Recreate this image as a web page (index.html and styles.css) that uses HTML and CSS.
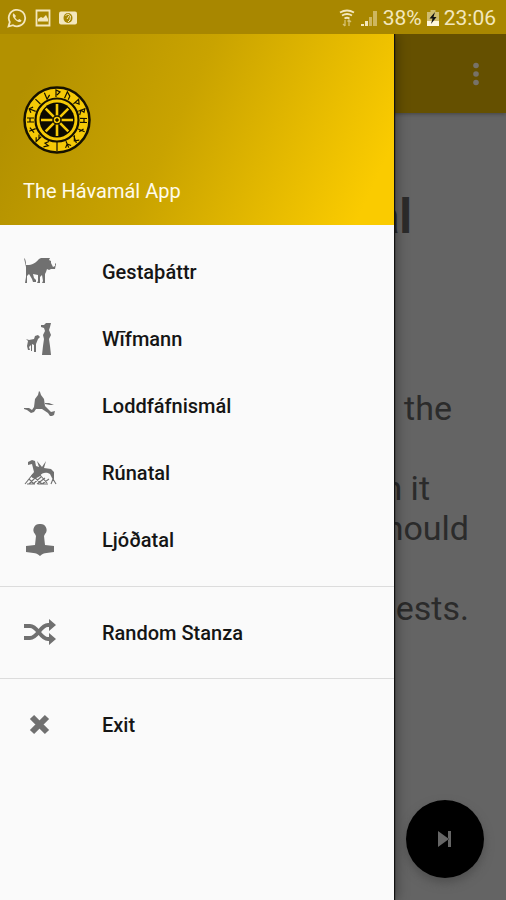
FILE: index.html
```html
<!DOCTYPE html>
<html lang="en">
<head>
<meta charset="utf-8">
<meta name="viewport" content="width=device-width, initial-scale=1">
<title>The Hávamál App</title>
<link rel="stylesheet" href="styles.css">
</head>
<body>
<div class="status">
  <div class="status-group notices">
    <svg width="20" height="20" viewBox="0 0 20 20" fill="none" stroke="currentColor" stroke-width="1.8"><path d="M1.500 18.500 2.800 14A8.200 8.200 0 1 1 6 17.200z"/><path d="M6.600 5.300c-2 2 0 5 2.200 7 2.200 1.900 4.700 2.700 5.800.3l-2.300-1.500-1.300 1c-1.500-.6-2.300-1.500-2.900-2.900l.9-1.200z" fill="currentColor" stroke="none"/></svg>
    <svg width="16" height="18" viewBox="0 0 16 18" fill="none" stroke="currentColor" stroke-width="1.800"><path d="M1.500 1.500h13v15h-13z"/><path d="M3 12.500V10l3-2 2 1 3-3 2 4v2.500z" fill="currentColor" stroke="none"/></svg>
    <svg width="18" height="14" viewBox="0 0 18 14"><rect width="18" height="13" y=".5" rx="2" fill="currentColor"/><ellipse cx="9" cy="7" rx="4.500" ry="5" fill="#a68600"/><path d="M6.500 4.500 9 3l2.500 2-.5 4-2 2M8 8l2-3" fill="none" stroke="currentColor"/></svg>
  </div>
  <div class="status-group">
    <svg width="16" height="18" viewBox="0 0 16 18" fill="none" stroke="currentColor" stroke-width="1.800"><path d="M1 3.500q7-4 14 0M3 6.500q5-3 10 0M5.500 9.500q2.500-1.500 5 0"/><path d="M6 11v6M4 15l2 2M10 17v-6M8.500 12.500 10 11l2 2" stroke-width="1.300" opacity=".6"/></svg>
    <svg width="18" height="18" viewBox="0 0 18 18" fill="currentColor"><path d="M1 15h3v2H1zM5 12h3v5H5z"/><path d="M9 8h3v9H9zM13 2h4v15h-4z" opacity=".5"/></svg>
    <span>38%</span>
    <svg width="12" height="18" viewBox="0 0 12 18"><path d="M3.500 1h5v2H12v14H0V3h3.500z" fill="#e9dfb8" opacity=".6"/><path d="M0 12h12v5H0z" fill="#fff8dc"/><path d="M8 3 2.500 9.500h3L4 15l5.500-7h-3z" fill="#111"/></svg>
    <span>23:06</span>
  </div>
</div>
<div class="screen">
  <div class="page">
    <header class="toolbar">
      <button class="more" aria-label="More options"><svg width="8" height="24" viewBox="0 0 8 24" fill="currentColor"><circle cx="4" cy="3.500" r="2.800"/><circle cx="4" cy="12" r="2.800"/><circle cx="4" cy="20.500" r="2.800"/></svg></button>
    </header>
    <main class="stanza">
      <h1>Hávamál</h1>
      <p class="line">before the</p>
      <p class="line short gap">when it</p>
      <p class="line wide">should</p>
      <p class="line wide gap">guests.</p>
    </main>
    <button class="next" aria-label="Next stanza"><svg width="16" height="18" viewBox="0 0 16 18" fill="currentColor"><path d="M1 1v16l11-8zM11 1h3v16h-3z"/></svg></button>
  </div>
  <aside class="drawer">
    <div class="brand">
      <svg width="68" height="68" viewBox="0 0 68 68" fill="none" stroke="#151100">
        <circle cx="34" cy="34" r="32.500" fill="#f5c906" stroke-width="2.500"/>
        <circle cx="34" cy="34" r="21.500" stroke-width="2.200"/>
        <circle cx="34" cy="34" r="17.500" fill="#0c0a00" stroke="none"/>
        <path d="M34 18v32M18 34h32M22.700 22.700l22.600 22.600M45.300 22.700 22.700 45.300" stroke="#f5c906" stroke-width="2.600"/>
        <circle cx="34" cy="34" r="4" fill="#f5c906" stroke="#151100" stroke-width="1.500"/><circle cx="34" cy="34" r="1.300" fill="#151100"/>
        <g stroke-width="1.200">
          <path d="M33 11V4l4 2-3 3"/>
          <path d="M32 11V4l4 3v4" transform="rotate(24 34 34)"/>
          <path d="M33 11V4l4 3-4 2" transform="rotate(48 34 34)"/>
          <path d="M33 11V4l3 2-3 2 4 3" transform="rotate(70 34 34)"/>
          <path d="M32 4v7M36 4v7M32 7h4" transform="rotate(91 34 34)"/>
          <path d="M34 4v7M32 6l4 3" transform="rotate(113 34 34)"/>
          <path d="M32 4l4 3-4 4M36 4l-3 7" transform="rotate(136 34 34)"/>
          <path d="M34 4v7M31 5l3 3 3-3" transform="rotate(157 34 34)"/>
          <path d="M34 3v9" transform="rotate(180 34 34)"/>
          <path d="M36 4l-4 3 4 1-3 3" transform="rotate(203 34 34)"/>
          <path d="M33 11V4l3 3M33 8l3 3" transform="rotate(226 34 34)"/>
          <path d="M34 4v7M31 8l6-2" transform="rotate(248 34 34)"/>
          <path d="M32 4v7M36 4v7M32 7h4" transform="rotate(270 34 34)"/>
          <path d="M34 4v7M31 7l3-3 3 3" transform="rotate(292 34 34)"/>
          <path d="M34 4v7" transform="rotate(314 34 34)"/>
          <path d="M33 4v7l4-3" transform="rotate(337 34 34)"/>
        </g>
      </svg>
      <p class="app-name">The Hávamál App</p>
    </div>
    <nav>
      <ul class="menu">
        <li><a href="#gestathattr"><svg class="icon" viewBox="0 0 34 34"><path d="M1 3l1 1c1 2 1 5 1 6 4 0 8 0 13-6l2-1h9l-1 2 2 1v2l2 4 2-1V8l1 1-1 5h-4l-2 1-2-1-1 3-1 2v9h-3l1-2-1-6-2 2v6h-3l1-2v-6l-5-1 1 4 2 2v2H10l-1-3-3-5-2 2v7H2l1-6V12z"/></svg>Gestaþáttr</a></li>
        <li><a href="#wifmann"><svg class="icon" viewBox="0 0 34 34"><path d="M18 3h3l2-2h5l-1 4-1 3 2 5-2 4 1 7 1 9h-9l1-9 1-7-1-4 2-4-1-3-3-1zM3 17l3 1 5-1 1-3 3-1 2 2-2 2-2 5v8h-2v-7l-2-1v7H8v-6l-2 2 1 3H5l-1-4 1-5z"/></svg>Wīfmann</a></li>
        <li><a href="#loddfafnismal"><svg class="icon" viewBox="0 0 34 34"><path d="M16 2l1 1 1 3 3 4 1 7 4 4 2 2 4-1-1 4-2 1h-2l-2-3-6-4h-6l-2 3-3 1-4-3-3-1v-1h5l3 2 2-3 1-8 3-4zM22 14h4l5 2h-4l-5-1z"/></svg>Loddfáfnismál</a></li>
        <li><a href="#runatal"><svg class="icon" viewBox="0 0 34 34"><path d="M5 6l4-2 3 1 1 5 3 1-2-6 5 6 4-6-2 7 7 1 3 3v8l-2-2-2-4c-3-2-8-2-10 2-4 3-8 3-9 0l3-4-2-8-4 1z"/><path d="M10 18l-8 10M14 20l-8 8M18 21l-8 7M22 22l-8 6M26 23l-7 5M6 23l5 5M11 21l8 7M17 19l7 8M28 28l2-5 3 5M4 28h8M15 28h10" fill="none" stroke="currentColor" stroke-width="1.100"/></svg>Rúnatal</a></li>
        <li><a href="#ljodatal"><svg class="icon" viewBox="0 0 34 34"><path d="M17 1a6 6 0 0 1 5 10l-1 2 1 9 9 1v6c-5 1-10 0-14 4-4-4-9-3-14-4v-6l9-1 1-9-1-2a6 6 0 0 1 5-10z"/></svg>Ljóðatal</a></li>
      </ul>
      <ul class="menu">
        <li><a href="#random"><svg class="icon" viewBox="0 0 34 34"><path d="M1 10h6c8 0 10 13 18 13h3M1 22h6c8 0 10-13 18-13h3" fill="none" stroke="currentColor" stroke-width="3.800"/><path d="M26 3l7 6-7 6zM26 17l7 6-7 6z"/></svg>Random Stanza</a></li>
      </ul>
      <ul class="menu">
        <li><a href="#exit"><svg class="icon" viewBox="0 0 34 34"><path d="M9 9l15 15M24 9 9 24" fill="none" stroke="currentColor" stroke-width="6"/></svg>Exit</a></li>
      </ul>
    </nav>
  </aside>
</div>
</body>
</html>
```
FILE: styles.css
```css
* {
  box-sizing: border-box;
}

body {
  margin: 0;
  min-height: 100vh;
  display: flex;
  flex-direction: column;
  font-family: Roboto, "Liberation Sans", sans-serif;
  font-size: 20px;
  background: #646464;
}

button {
  border: 0;
  padding: 0;
  display: grid;
  place-items: center;
}

svg {
  display: block;
  flex: none;
}

.status {
  height: 34px;
  padding: 2px 10px 0 7px;
  display: flex;
  align-items: center;
  justify-content: space-between;
  background: #a88700;
  color: #f3e7bd;
  font-size: 21px;
}

.status-group {
  display: flex;
  align-items: center;
  gap: 5px;
}

.notices {
  gap: 8px;
}

.screen {
  flex: 1;
  display: grid;
  position: relative;
  overflow: hidden;
}

.page {
  display: flex;
  flex-direction: column;
  text-align: right;
  color: #2b2b2b;
}

.toolbar {
  height: 79px;
  padding: 0 26px;
  display: flex;
  align-items: center;
  justify-content: flex-end;
  background: #655000;
  box-shadow: 0 1px 4px #444;
}

.more {
  background: none;
  color: #777268;
}

.stanza {
  flex: 1;
  padding-top: 76px;
}

h1 {
  margin: 0 94px 143px 0;
  font-size: 48px;
  line-height: 56px;
}

.line {
  margin: 0;
  padding-right: 54px;
  font-size: 34px;
  line-height: 40px;
}

.gap {
  margin-top: 40px;
}

.short {
  padding-right: 76px;
}

.wide {
  padding-right: 37px;
}

.next {
  align-self: flex-end;
  width: 78px;
  height: 78px;
  margin: 0 22px 22px;
  border-radius: 50%;
  background: #000;
  color: #666;
  box-shadow: 0 5px 10px #505050;
}

.drawer {
  position: absolute;
  inset: 0 auto 0 0;
  width: calc(100% - 112px);
  background: #fafafa;
  box-shadow: 1px 0 1px #111, 2px 0 12px rgba(0, 0, 0, 0.4);
}

.brand {
  height: 191px;
  padding: 52px 23px 20px;
  display: flex;
  flex-direction: column;
  justify-content: space-between;
  background: linear-gradient(115deg, #b39100 10%, #c9a300 45%, #facb00 92%);
  color: #fffbea;
}

.app-name {
  margin: 0;
  line-height: 28px;
}

.menu {
  margin: 0;
  padding: 13px 0;
  list-style: none;
}

.menu + .menu {
  padding: 12px 0;
  border-top: 1px solid #dcdcdc;
}

.menu a {
  height: 67px;
  padding: 0 23px;
  display: flex;
  align-items: center;
  gap: 45px;
  color: #151515;
  font-weight: 500;
  text-decoration: none;
}

.icon {
  width: 34px;
  height: 34px;
  fill: currentColor;
  color: #707070;
}
```
